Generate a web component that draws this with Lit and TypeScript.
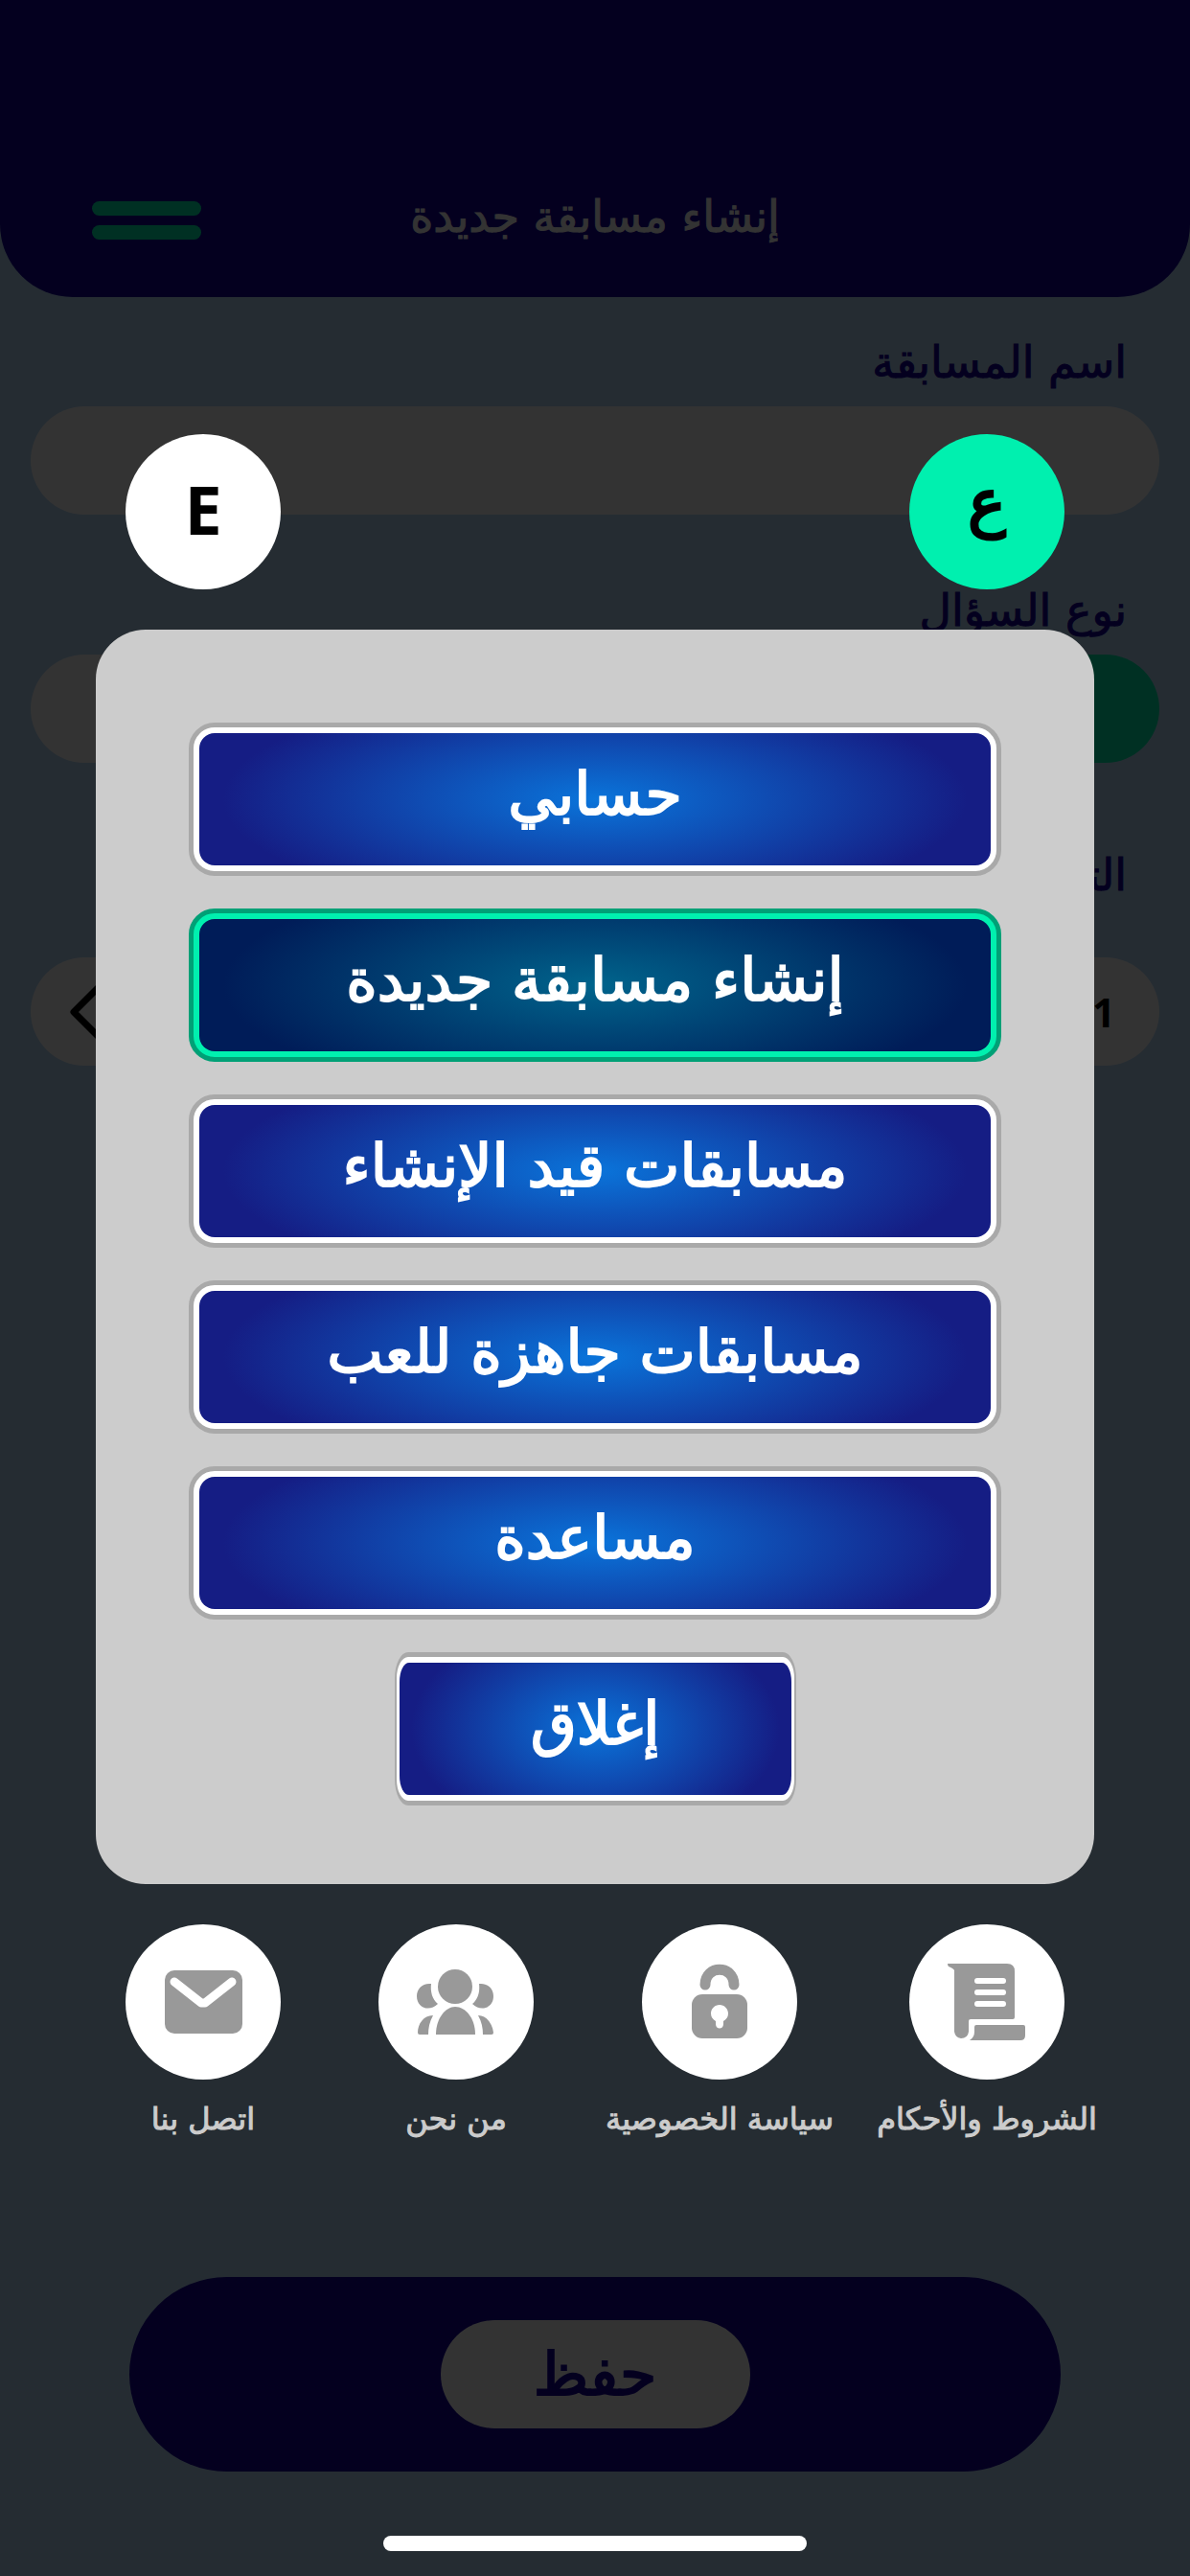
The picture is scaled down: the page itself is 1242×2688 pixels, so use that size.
import { LitElement, html, css, svg } from "lit";
import { customElement, state } from "lit/decorators.js";
import { classMap } from "lit/directives/class-map.js";

const MENU = ["حسابي", "إنشاء مسابقة جديدة", "مسابقات قيد الإنشاء", "مسابقات جاهزة للعب", "مساعدة"];

const mailIcon = svg`<svg viewBox="0 0 162 162" aria-hidden="true">
  <rect x="41" y="48" width="81" height="66" rx="10" fill="#999"/>
  <path d="M51 60 L79 82 H83 L111 60" fill="none" stroke="#fff" stroke-width="9" stroke-linecap="round" stroke-linejoin="round"/>
</svg>`;

const peopleIcon = svg`<svg viewBox="0 0 162 162" aria-hidden="true" fill="#999">
  <circle cx="80" cy="65" r="18"/>
  <path d="M60 115 C60 98 70 86 80 86 C91 86 101 98 101 115 Z"/>
  <path d="M55 62 C46 61 40 67 40 75 C40 87 53 92 62 83 C56 78 54 70 55 62 Z"/>
  <path d="M105 62 C114 61 120 67 120 75 C120 87 107 92 98 83 C104 78 106 70 105 62 Z"/>
  <path d="M57 95 C47 95 41 104 41 113 Q41 115 43 115 H52 Q52 104 57 95 Z"/>
  <path d="M104 95 C113 95 119 104 120 113 Q120 115 118 115 H109 Q109 104 104 95 Z"/>
</svg>`;

const lockIcon = svg`<svg viewBox="0 0 162 162" aria-hidden="true">
  <path d="M66 63 C66 42 96 42 96 63" fill="none" stroke="#999" stroke-width="11" stroke-linecap="round"/>
  <rect x="52" y="73" width="58" height="46" rx="11" fill="#999"/>
  <path d="M81 84 C76 84 72 88 72 93 C72 97 74 99 77 101 V104 C77 110 85 110 85 104 V101 C88 99 90 97 90 93 C90 88 86 84 81 84 Z" fill="#fff"/>
</svg>`;

const termsIcon = svg`<svg viewBox="0 0 162 162" aria-hidden="true" fill="#999">
  <path d="M40 41 H102 Q110 41 110 49 V97 Q110 99 108 99 H64 Q62 99 62 101 V112 Q61 119 54 119 Q48 118 47 112 V48 Q46 46 41 44 Q40 43 40 41 Z"/>
  <path d="M70 105 H119 Q121 105 121 107 V116 Q121 121 116 121 H63 Q68 118 68 112 V107 Q68 105 70 105 Z"/>
  <path d="M71 59 H98 M71 71 H98 M71 83 H98" stroke="#fff" stroke-width="6" stroke-linecap="round"/>
</svg>`;

const LINKS = [
  { text: "اتصل بنا", icon: mailIcon },
  { text: "من نحن", icon: peopleIcon },
  { text: "سياسة الخصوصية", icon: lockIcon },
  { text: "الشروط والأحكام", icon: termsIcon },
];

@customElement("app-root")
export class AppRoot extends LitElement {
  @state() private active = 1;
  @state() private arabic = true;

  static styles = css`
    :host {
      display: block;
      position: relative;
      direction: rtl;
      font-family: "DejaVu Sans", sans-serif;
      font-weight: 400;
      -webkit-text-stroke: 1px currentColor;
    }
    * { box-sizing: border-box; }
    button, input { font: inherit; border: 0; margin: 0; padding: 0; cursor: pointer; }
    h1 { margin: 0; }
    a { color: inherit; text-decoration: none; }
    svg { display: block; }

    .page {
      min-height: 100vh;
      display: flex;
      flex-direction: column;
      background: #b9dcfa;
      color: #14009b;
    }
    .header {
      height: 310px;
      padding: 146px 96px 0;
      display: grid;
      grid-template-columns: 114px 1fr 114px;
      align-items: start;
      background: #14009b;
      border-radius: 0 0 76px 76px;
    }
    .title {
      grid-column: 2;
      text-align: center;
      color: #fff;
      font-size: 46px;
      line-height: 160px;
      font-weight: 400;
    }
    .burger {
      margin-top: 64px;
      display: flex;
      flex-direction: column;
      gap: 10px;
      background: none;
    }
    .burger span { height: 15px; border-radius: 8px; background: #00f0af; width: 100%; }
    .form { flex: 1; padding: 28px 32px; display: flex; flex-direction: column; gap: 60px; }
    .field { display: flex; flex-direction: column; gap: 6px; }
    .caption { font-size: 46px; line-height: 80px; padding: 0 34px; }
    .field.spaced { margin-top: 17px; gap: 46px; }
    .pill { height: 113px; border-radius: 57px; background: #fff; width: 100%; }
    input.pill { padding: 0 40px; text-align: right; }
    .options { display: grid; grid-template-columns: 1fr 1fr; gap: 32px; }
    .pill.on { background: #00f0af; }
    .stepper {
      display: flex;
      align-items: center;
      justify-content: space-between;
      padding: 0 46px 0 40px;
      color: #000;
      font: 700 42px "Noto Sans", sans-serif;
      -webkit-text-stroke: 0;
    }
    .stepper svg { width: 36px; height: 60px; }
    .save-bar {
      margin: 0 135px 109px;
      padding: 45px;
      display: flex;
      justify-content: center;
      background: #14009b;
      border-radius: 102px;
    }
    .save {
      width: 323px;
      height: 113px;
      border-radius: 57px;
      background: #fff;
      color: #14009b;
      font-size: 62px;
      -webkit-text-stroke: 2px currentColor;
    }

    .overlay {
      position: absolute;
      inset: 0;
      padding: 453px 0 26px;
      display: flex;
      flex-direction: column;
      background: rgba(0, 0, 0, 0.8);
    }
    .quad {
      direction: ltr;
      display: grid;
      grid-template-columns: 264fr 264fr 286fr 272fr;
      justify-items: center;
      padding: 0 76px 0 80px;
    }
    .disc {
      width: 162px;
      height: 162px;
      border-radius: 50%;
      background: #fff;
      color: #000;
      display: block;
    }
    .latin { font: 700 70px "Noto Sans", sans-serif; padding-bottom: 6px; -webkit-text-stroke: 0; }
    .arabic { grid-column: 4; font-size: 66px; padding-bottom: 20px; -webkit-text-stroke: 3px currentColor; }
    .disc.on { background: #00f0af; }
    .sheet {
      margin: 42px 100px;
      padding: 97px 97px 82px;
      display: flex;
      flex-direction: column;
      align-items: center;
      gap: 34px;
      background: #ccc;
      border-radius: 52px;
    }
    .item {
      width: 100%;
      height: 160px;
      border: 5px solid #a9a9a9;
      border-radius: 27px;
      background: #fff;
      padding: 6px;
      color: #fff;
      font-size: 62px;
      -webkit-text-stroke: 2px currentColor;
    }
    .face {
      display: block;
      height: 138px;
      line-height: 128px;
      border-radius: 16px;
      background: radial-gradient(ellipse 47% 86% at center, #0a74da, #151d84);
    }
    .item.on { border-color: #00a076; background: #00f0af; }
    .item.on .face { background: radial-gradient(ellipse 47% 86% at center, #00648c, #001c58); }
    .item.close { width: 419px; border-width: 5px 2px; padding: 6px 3px; border-radius: 14px / 27px; }
    .item.close .face { border-radius: 10px / 20px; }
    .link { display: flex; flex-direction: column; align-items: center; color: #ccc; font-size: 32px; line-height: 82px; white-space: nowrap; }
    .home { margin: auto auto 0; width: 442px; height: 16px; border-radius: 8px; background: #fff; }
  `;

  render() {
    return html`
      <div class="page">
        <header class="header">
          <h1 class="title">إنشاء مسابقة جديدة</h1>
          <button class="burger" aria-label="القائمة"><span></span><span></span></button>
        </header>
        <main class="form">
          <div class="field">
            <label class="caption" for="name">اسم المسابقة</label>
            <input id="name" class="pill" type="text" />
          </div>
          <div class="field">
            <span class="caption">نوع السؤال</span>
            <div class="options">
              <button class="pill on" aria-label="نص"></button>
              <button class="pill" aria-label="صورة"></button>
            </div>
          </div>
          <div class="field spaced">
            <span class="caption">الترتيب</span>
            <button class="pill stepper">
              <span>1</span>
              <svg viewBox="0 0 36 60" aria-hidden="true"><path d="M32 3 L5 30 L32 57" fill="none" stroke="#000" stroke-width="7" stroke-linejoin="round"/></svg>
            </button>
          </div>
        </main>
        <footer class="save-bar"><button class="save">حفظ</button></footer>
      </div>

      <div class="overlay">
        <div class="quad">
          <button class=${classMap({ disc: true, latin: true, on: !this.arabic })} @click=${() => (this.arabic = false)}>E</button>
          <button class=${classMap({ disc: true, arabic: true, on: this.arabic })} @click=${() => (this.arabic = true)}>ع</button>
        </div>
        <nav class="sheet">
          ${MENU.map(
            (text, i) => html`<button
              class=${classMap({ item: true, on: i === this.active })}
              @click=${() => (this.active = i)}
            ><span class="face">${text}</span></button>`
          )}
          <button class="item close"><span class="face">إغلاق</span></button>
        </nav>
        <div class="quad">
          ${LINKS.map((l) => html`<a class="link" href="#"><span class="disc">${l.icon}</span>${l.text}</a>`)}
        </div>
        <div class="home"></div>
      </div>
    `;
  }
}
